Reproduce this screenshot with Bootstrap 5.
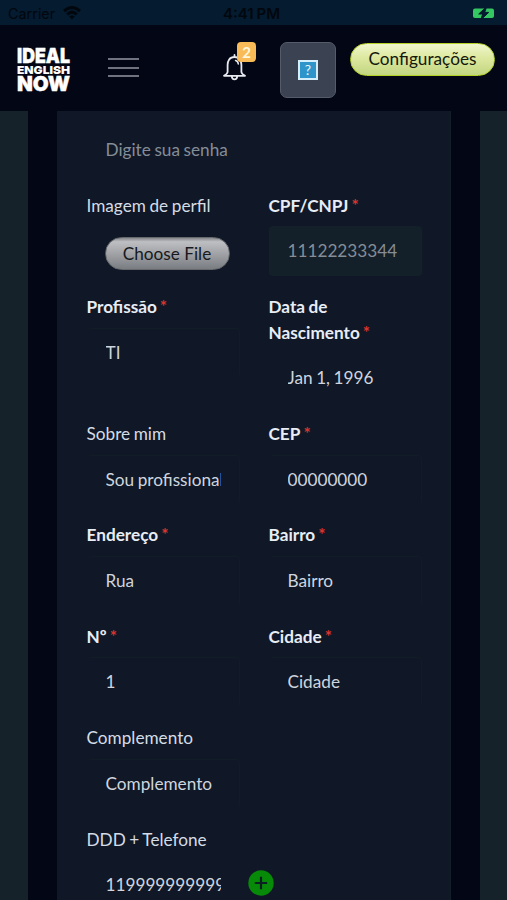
<!DOCTYPE html>
<html lang="pt-BR">
<head>
<meta charset="utf-8">
<meta name="viewport" content="width=device-width, initial-scale=1">
<title>Ideal English Now</title>
<link href="https://cdn.jsdelivr.net/npm/bootstrap@5.3.0/dist/css/bootstrap.min.css" rel="stylesheet">
<style>
html,body{height:900px;overflow:hidden}
body{background:#030614;color:#d5dce5;font-family:Lato,sans-serif;font-size:17.2px;line-height:25.4px;word-spacing:-.8px}
.status-bar{height:25px;background:#041b30;color:#02070d;font:14.4px/28px Inter,sans-serif}
.status-bar>*{flex:1 1 0}
.status-time{font-weight:600;font-size:15px}
.top-nav{height:86px;background:#030614;padding:15px 12px 0 16px}
.logo{width:55px;height:56px;padding-top:6px;flex:none}
.burger{width:31px;margin:18px 0 0 37px}
.burger span{display:block;height:2px;background:#70737f;margin-bottom:6.5px}
.bell{margin:12px 0 0 83px;width:26px;height:30px}
.bell-badge{left:15px;top:-10px;width:19px;height:20px;background:#f9bb57;border-radius:4px;font-size:15px;line-height:20px;color:#fff6df;padding:0}
.help-btn{width:56px;height:56px;margin:2px 0 0 32px;background:#3b4252;border:1px solid #555b69;border-radius:7px}
.config-btn{width:145px;height:33px;margin:3px 0 0 14px;border:1.5px solid #b5d126;border-radius:17px;background:linear-gradient(#f0f6cd,#dce89f 45%,#c2d681);color:#14180d;font-size:17.2px;line-height:27px;padding:0 0 2px}
.page-band{height:789px;background:#15222a;padding:0 27px 0 28px}
.page-gap{height:789px;background:#030614;padding:0 29px}
.form-panel{height:789px;background:#101827;padding:14.1px 0 0 29.5px;border-right:1px solid #121f29;overflow:hidden}
.form-grid{--bs-gutter-x:29px;width:364px;margin-left:0;margin-right:0}
.form-grid>div{width:182px;padding:0 29px 0 0;margin-bottom:17.7px}
.form-grid>.wide{padding:0}
.form-label{display:block;margin-bottom:8.3px;color:#d5dce5}
.req{font-weight:700;color:#e8ecf4}
.req i{color:#d9352e;font-style:normal;margin-left:3px}
.form-control,.form-control:disabled{height:50px;border:1px solid transparent;border-radius:4px;background:transparent;color:#cfd5de;padding:0 18px;font-size:17.2px;line-height:50px;word-spacing:-.8px}
.form-control:disabled{background:#131f29;color:#858d97;opacity:1}
.form-control::placeholder{color:#858d97;opacity:1}
.edge{border-color:#121c27 #121c27 transparent transparent}
.password{width:165px}
.file-btn{width:125px;height:33px;margin:18.5px 0 0 18px;border:1px solid #67696d;border-radius:17px;background:linear-gradient(#85878a,#bebfc2 12%,#a1a3a7 50%,#797c81);color:#16191e;font-size:17.2px;line-height:32px;padding:0}
.add-btn{width:26px;height:26px;margin:-5px 0 0 8px;flex:none}
.phone{width:153px;flex:none}
</style>
</head>
<body>
<div class="status-bar d-flex">
  <div class="d-flex ps-2">Carrier<svg class="ms-2" width="18" height="25" viewBox="0 0 18 25" fill="none" stroke="#02070d" stroke-width="3"><path d="M1 11.2Q9 3.8 17 11.2M4.2 14.3Q9 10 13.8 14.3"/><path d="M6.3 16.5Q9 14.6 11.7 16.5L9 19.3Z" fill="#02070d" stroke="none"/></svg></div>
  <div class="status-time text-center">4:41 PM</div>
  <div class="text-end pe-2 me-1"><svg class="d-block ms-auto" width="23" height="25" viewBox="0 0 23 25"><rect x="1" y="8.5" width="21" height="9.5" rx="2" fill="#35c862"/><path d="M14.7 6.5 6.7 14H10.7L8.7 20 16.7 12.4H12.7Z" fill="#041b30" stroke="#041b30"/></svg></div>
</div>
<header class="top-nav d-flex align-items-start">
  <div class="logo"><svg class="d-block overflow-visible" width="55" height="46" viewBox="0 0 55 46" fill="#fff" stroke="#fff" font-family="Inter,sans-serif" font-weight="900" stroke-width=".4">
    <text x="1" y="17.3" font-size="20.5" textLength="53" lengthAdjust="spacingAndGlyphs">IDEAL</text>
    <text x="1" y="27.8" font-size="11" stroke-width="0" textLength="53" lengthAdjust="spacingAndGlyphs">ENGLISH</text>
    <text x="1" y="44.7" font-size="20.5" textLength="53" lengthAdjust="spacingAndGlyphs">NOW</text>
  </svg></div>
  <div class="burger"><span></span><span></span><span></span></div>
  <div class="bell position-relative">
    <svg class="d-block" width="26" height="30" viewBox="0 0 26 30" fill="none" stroke="#e8eaf0" stroke-width="1.8" stroke-linejoin="round" stroke-linecap="round"><path d="M12.5 3V5M12.5 5C7.5 5 5.6 9 5.6 13V20Q5.5 21.7 2 23.8H23Q19.5 21.7 19.4 20V13C19.4 9 17.5 5 12.5 5ZM9.8 24.3C10 28.5 15 28.5 15.2 24.3"/><path d="M13.5 8.5Q16 9 16.3 12" stroke-width="1.5"/></svg>
    <span class="badge bell-badge position-absolute">2</span>
  </div>
  <button class="btn help-btn d-flex align-items-center justify-content-center p-0"><svg width="20" height="20" viewBox="0 0 20 20"><rect width="20" height="20" fill="#d4eefb"/><rect x="2" y="2" width="16" height="16" fill="#2e94c9"/><text x="10" y="15" text-anchor="middle" font-family="Lato,sans-serif" font-size="14" fill="#e8f8ff">?</text></svg></button>
  <button class="btn config-btn">Configurações</button>
</header>
<main class="page-band"><div class="page-gap"><form class="form-panel">
  <div class="form-grid row">
    <div class="wide"><input class="form-control password" placeholder="Digite sua senha"></div><div></div>
    <div class="wide"><label class="form-label">Imagem de perfil</label><button type="button" class="btn file-btn d-block">Choose File</button></div>
    <div><label class="form-label req">CPF/CNPJ<i>*</i></label><input class="form-control" value="11122233344" disabled></div>
    <div><label class="form-label req">Profissão<i>*</i></label><input class="form-control edge" value="TI"></div>
    <div><label class="form-label req">Data de Nascimento<i>*</i></label><input class="form-control" value="Jan 1, 1996"></div>
    <div><label class="form-label">Sobre mim</label><input class="form-control edge" value="Sou profissional"></div>
    <div><label class="form-label req">CEP<i>*</i></label><input class="form-control edge" value="00000000"></div>
    <div><label class="form-label req">Endereço<i>*</i></label><input class="form-control edge" value="Rua"></div>
    <div><label class="form-label req">Bairro<i>*</i></label><input class="form-control edge" value="Bairro"></div>
    <div><label class="form-label req">Nº<i>*</i></label><input class="form-control edge" value="1"></div>
    <div><label class="form-label req">Cidade<i>*</i></label><input class="form-control edge" value="Cidade"></div>
    <div><label class="form-label">Complemento</label><input class="form-control edge" value="Complemento"></div><div></div>
    <div class="wide"><label class="form-label">DDD + Telefone</label><div class="d-flex align-items-center"><input class="form-control phone" value="11999999999999"><svg class="add-btn" viewBox="0 0 26 26"><circle cx="13" cy="13" r="12.7" fill="#078a08"/><path d="M13 6.8V19.2M6.8 13H19.2" stroke="#0c1f22" stroke-width="2.2"/></svg></div></div>
  </div>
</form></div></main>
<script src="https://cdn.jsdelivr.net/npm/bootstrap@5.3.0/dist/js/bootstrap.bundle.min.js"></script>
</body>
</html>
